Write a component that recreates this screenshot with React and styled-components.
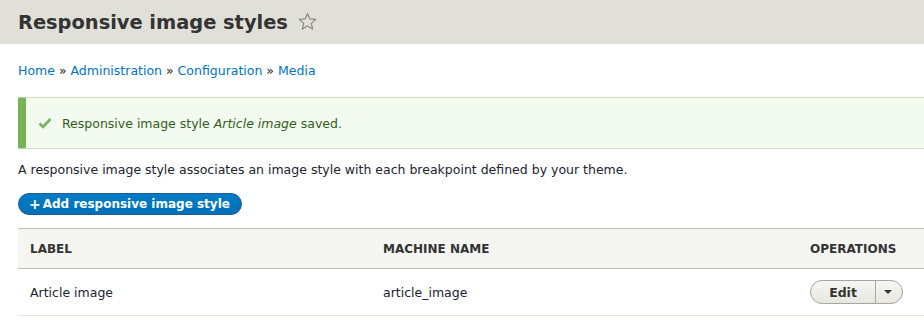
import React from 'react'
import styled, { createGlobalStyle } from 'styled-components'

const GlobalStyle = createGlobalStyle`
  html, body {
    margin: 0;
    padding: 0;
    background: #fff;
    overflow: hidden;
  }
  body {
    font-family: "DejaVu Sans", "Noto Sans", sans-serif;
    font-size: 12.5px;
    color: #222330;
  }
`;

const Header = styled.div`
  background: #e0e0d8;
  height: 44px;
  padding: 0 18px;
  display: flex;
  align-items: center;
`;

const Title = styled.h1`
  margin: 0;
  font-size: 19.4px;
  font-weight: 700;
  color: #333;
  display: flex;
  align-items: center;
  gap: 10px;
`;

const Star = styled.svg`
  width: 19px;
  height: 19px;
  margin-top: -2px;
`;

const Content = styled.div`
  width: 940px;
  padding: 0 0 0 18px;
`;

const Breadcrumb = styled.nav`
  padding: 19px 0 0;
  height: 26px;
  line-height: 16px;
  color: #222330;
  a {
    color: #0074bd;
    text-decoration: none;
  }
`;

const Message = styled.div`
  margin-top: 8px;
  height: 50px;
  display: flex;
  align-items: center;
  gap: 10px;
  padding-left: 12px;
  background: #f3faef;
  border: 1px solid #c9e1bd;
  border-left: 8px solid #77b259;
  border-radius: 2px;
  color: #325e1c;
`;

const Description = styled.p`
  margin: 13px 0 0;
  line-height: 16px;
`;

const AddButton = styled.a`
  display: inline-flex;
  align-items: center;
  margin-top: 15px;
  height: 22px;
  padding: 0 11px 0 10px;
  border-radius: 11px;
  background: linear-gradient(to bottom, #007bc6, #0071b8);
  border: 1px solid #1e5c90;
  box-sizing: border-box;
  color: #fff;
  font-weight: 700;
  font-size: 12px;
  text-decoration: none;
  span {
    margin-right: 2px;
    font-size: 14px;
  }
`;

const Table = styled.table`
  margin-top: 13px;
  width: 100%;
  border-collapse: collapse;
`;

const Th = styled.th`
  text-align: left;
  background: #f5f5f2;
  border-top: 1px solid #bfbfba;
  border-bottom: 1px solid #bfbfba;
  height: 39px;
  padding: 0 12px;
  font-size: 12px;
  font-weight: 700;
  text-transform: uppercase;
  color: #333;
  width: ${p => p.$w || 'auto'};
`;

const Td = styled.td`
  height: 46px;
  padding: 0 12px;
  border-bottom: 1px solid #e6e4df;
`;

const DropButton = styled.div`
  display: inline-flex;
  align-items: stretch;
  height: 24px;
  box-sizing: border-box;
  border: 1px solid #a6a6a6;
  border-radius: 12px;
  background: linear-gradient(to bottom, #f6f6f3, #e7e7df);
  overflow: hidden;
`;

const DropMain = styled.span`
  display: flex;
  align-items: center;
  justify-content: center;
  width: 64px;
  font-weight: 700;
  color: #333;
  border-right: 1px solid #a6a6a6;
`;

const DropToggle = styled.span`
  display: flex;
  align-items: center;
  justify-content: center;
  width: 26px;
  &::after {
    content: '';
    border-left: 4px solid transparent;
    border-right: 4px solid transparent;
    border-top: 4px solid #333;
    margin-left: -2px;
  }
`;

export default function App() {
  return (
    <>
      <GlobalStyle />
      <Header>
        <Title>
          Responsive image styles
          <Star viewBox="0 0 20 20">
            <path
              d="M10 1.5 L12.5 7.3 L18.7 7.8 L14 11.9 L15.4 18 L10 14.8 L4.6 18 L6 11.9 L1.3 7.8 L7.5 7.3 Z"
              fill="none"
              stroke="#868680"
              strokeWidth="1.2"
              strokeLinejoin="round"
            />
          </Star>
        </Title>
      </Header>
      <Content>
        <Breadcrumb>
          <a href="#">Home</a> » <a href="#">Administration</a> » <a href="#">Configuration</a> » <a href="#">Media</a>
        </Breadcrumb>
        <Message>
          <svg width="14" height="12" viewBox="0 0 14 12">
            <path d="M1.5 6.5 L5 10 L12.5 2" fill="none" stroke="#77b259" strokeWidth="2.6" />
          </svg>
          <span>Responsive image style <em>Article image</em> saved.</span>
        </Message>
        <Description>
          A responsive image style associates an image style with each breakpoint defined by your theme.
        </Description>
        <AddButton href="#"><span>+</span>Add responsive image style</AddButton>
        <Table>
          <thead>
            <tr>
              <Th $w="329px">Label</Th>
              <Th $w="403px">Machine name</Th>
              <Th>Operations</Th>
            </tr>
          </thead>
          <tbody>
            <tr>
              <Td>Article image</Td>
              <Td>article_image</Td>
              <Td>
                <DropButton>
                  <DropMain>Edit</DropMain>
                  <DropToggle />
                </DropButton>
              </Td>
            </tr>
          </tbody>
        </Table>
      </Content>
    </>
  )
}
